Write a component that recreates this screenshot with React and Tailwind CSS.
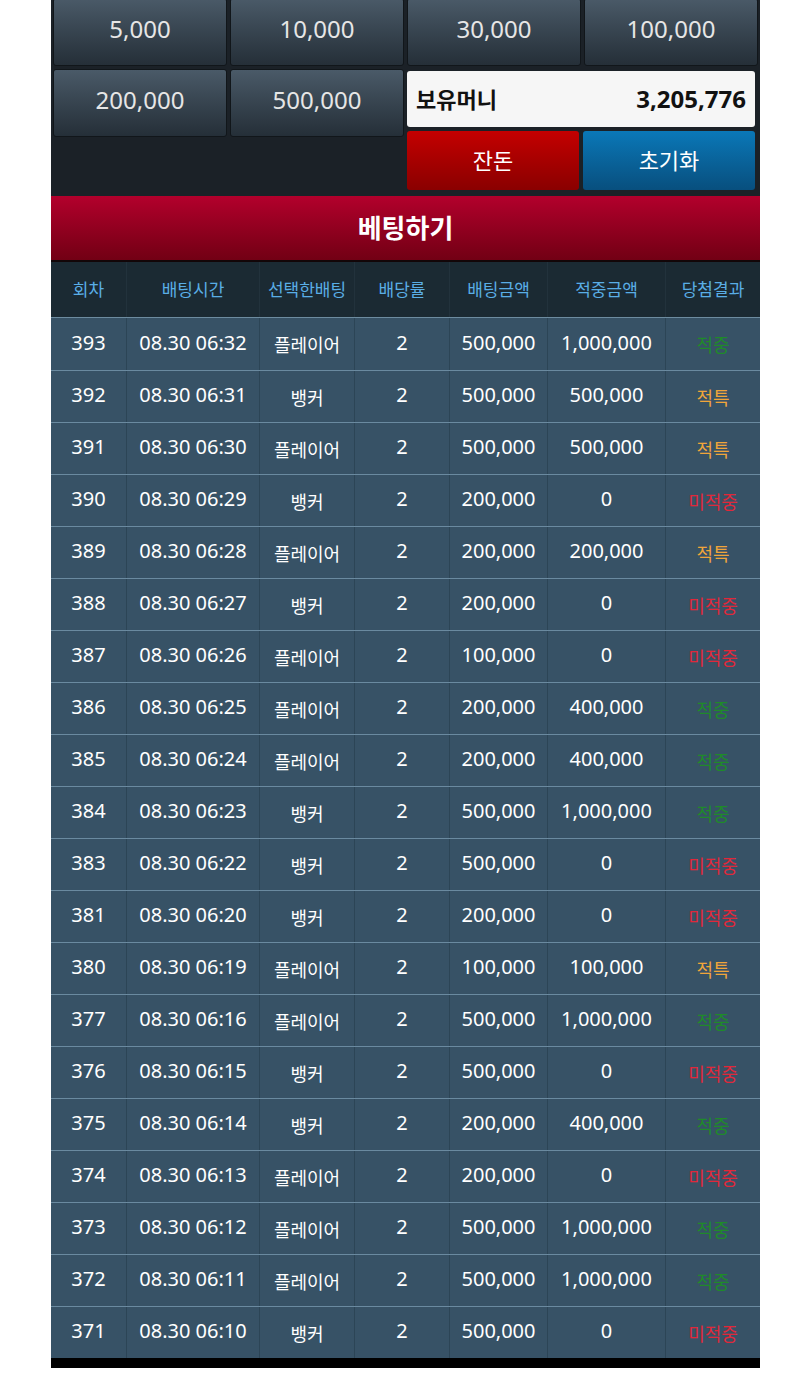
import React from 'react';

const FONT = { fontFamily: '"Noto Sans", "Noto Sans CJK KR", sans-serif' };

const rows = [
  ['393', '08.30 06:32', '플레이어', '500,000', '1,000,000', '적중'],
  ['392', '08.30 06:31', '뱅커', '500,000', '500,000', '적특'],
  ['391', '08.30 06:30', '플레이어', '500,000', '500,000', '적특'],
  ['390', '08.30 06:29', '뱅커', '200,000', '0', '미적중'],
  ['389', '08.30 06:28', '플레이어', '200,000', '200,000', '적특'],
  ['388', '08.30 06:27', '뱅커', '200,000', '0', '미적중'],
  ['387', '08.30 06:26', '플레이어', '100,000', '0', '미적중'],
  ['386', '08.30 06:25', '플레이어', '200,000', '400,000', '적중'],
  ['385', '08.30 06:24', '플레이어', '200,000', '400,000', '적중'],
  ['384', '08.30 06:23', '뱅커', '500,000', '1,000,000', '적중'],
  ['383', '08.30 06:22', '뱅커', '500,000', '0', '미적중'],
  ['381', '08.30 06:20', '뱅커', '200,000', '0', '미적중'],
  ['380', '08.30 06:19', '플레이어', '100,000', '100,000', '적특'],
  ['377', '08.30 06:16', '플레이어', '500,000', '1,000,000', '적중'],
  ['376', '08.30 06:15', '뱅커', '500,000', '0', '미적중'],
  ['375', '08.30 06:14', '뱅커', '200,000', '400,000', '적중'],
  ['374', '08.30 06:13', '플레이어', '200,000', '0', '미적중'],
  ['373', '08.30 06:12', '플레이어', '500,000', '1,000,000', '적중'],
  ['372', '08.30 06:11', '플레이어', '500,000', '1,000,000', '적중'],
  ['371', '08.30 06:10', '뱅커', '500,000', '0', '미적중'],
];

const resultColor = {
  '적중': 'text-[#1f8a2a]',
  '적특': 'text-[#f0a53a]',
  '미적중': 'text-[#e0283a]',
};

const headers = ['회차', '배팅시간', '선택한배팅', '배당률', '배팅금액', '적중금액', '당첨결과'];

const COLS = 'grid grid-cols-[76px_133px_95px_95px_98px_118px_94px]';

// ─── Chip button ───────────────────────────────────────────────────────────────

const Chip = ({ label }) => (
  <button className="h-[68px] rounded-[3px] border border-[#11161a] bg-gradient-to-b from-[#4a5a68] to-[#252f38] pb-[6px] text-[24px] text-[#e6e6e6]">
    {label}
  </button>
);

export default function App() {
  return (
    <div className="min-h-[1375px] bg-white" style={FONT}>
      <div className="-mt-[2px] ml-[51px] w-[709px] bg-[#1b2127]">
        {/* ─── Chips ─── */}
        <div className="grid grid-cols-4 gap-[3px] px-[2px]">
          <Chip label="5,000" />
          <Chip label="10,000" />
          <Chip label="30,000" />
          <Chip label="100,000" />
        </div>
        <div className="mt-[3px] grid grid-cols-4 gap-[3px] px-[2px] pb-[6px]">
          <div className="col-span-2 grid grid-cols-2 gap-[3px] self-start">
            <Chip label="200,000" />
            <Chip label="500,000" />
          </div>
          <div className="col-span-2 flex flex-col gap-[4px] pt-[2px] pr-[3px]">
            <div className="flex h-[56px] items-center justify-between rounded-[3px] bg-[#f6f6f6] px-[9px]">
              <span className="text-[22px] font-bold text-[#111]">보유머니</span>
              <span className="text-[24px] font-bold text-[#111]">3,205,776</span>
            </div>
            <div className="grid grid-cols-2 gap-[4px]">
              <button className="h-[59px] rounded-[3px] bg-gradient-to-b from-[#c40000] to-[#8a0000] text-[22px] text-white">
                잔돈
              </button>
              <button className="h-[59px] rounded-[3px] bg-gradient-to-b from-[#0a78b8] to-[#084f7e] text-[22px] text-white">
                초기화
              </button>
            </div>
          </div>
        </div>

        {/* ─── Bet header ─── */}
        <div className="flex h-[66px] items-center justify-center border-b-2 border-[#120608] bg-gradient-to-b from-[#b3002c] to-[#720014] text-[26px] font-bold text-white">
          베팅하기
        </div>

        {/* ─── Table header ─── */}
        <div className={`${COLS} h-[56px] border-b border-[#6d8ca0] bg-[#1b2a33]`}>
          {headers.map((h, i) => (
            <div
              key={h}
              className={`flex items-center justify-center text-[17px] text-[#5aaee6] ${i < 6 ? 'border-r border-[#22323c]' : ''}`}
            >
              {h}
            </div>
          ))}
        </div>

        {/* ─── Rows ─── */}
        {rows.map((r, ri) => (
          <div
            key={r[0]}
            className={`${COLS} h-[52px] bg-[#375266] text-white ${ri > 0 ? 'border-t border-[#6a8aa0]' : ''}`}
          >
            <div className="flex items-center justify-center border-r border-[#2c4556] pb-[3px] text-[20px]">{r[0]}</div>
            <div className="flex items-center justify-center border-r border-[#2c4556] pb-[3px] text-[20px]">{r[1]}</div>
            <div className="flex items-center justify-center border-r border-[#2c4556] pt-[3px] text-[18px]">{r[2]}</div>
            <div className="flex items-center justify-center border-r border-[#2c4556] pb-[3px] text-[20px]">2</div>
            <div className="flex items-center justify-center border-r border-[#2c4556] pb-[3px] text-[20px]">{r[3]}</div>
            <div className="flex items-center justify-center border-r border-[#2c4556] pb-[3px] text-[20px]">{r[4]}</div>
            <div className={`flex items-center justify-center pt-[3px] text-[18px] ${resultColor[r[5]]}`}>{r[5]}</div>
          </div>
        ))}
        <div className="h-[10px] bg-black" />
      </div>
    </div>
  );
}
